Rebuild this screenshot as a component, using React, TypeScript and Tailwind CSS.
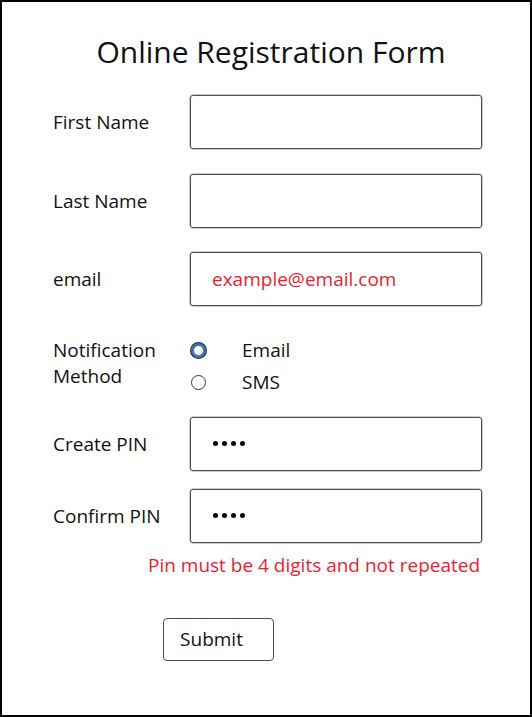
import React from "react";

const font = { fontFamily: '"Open Sans", "Noto Sans", sans-serif' };

const Field = ({ children }: { children?: React.ReactNode }) => (
  <div className="w-[292px] h-[54px] border border-[#4d4d4d] rounded-[3px] flex items-center pl-[21px] shadow-[0_0_0_0.5px_#9a9a9a]">
    {children}
  </div>
);

const PinDots = () => (
  <div className="flex gap-[4px] pl-[1px] -mt-[2px]">
    {[0, 1, 2, 3].map((i) => (
      <span key={i} className="w-[5px] h-[5px] rounded-full bg-black" />
    ))}
  </div>
);

const Row = ({
  label,
  className,
  children,
}: {
  label: string;
  className: string;
  children?: React.ReactNode;
}) => (
  <div className={`flex items-center ${className}`}>
    <div className="w-[137px] text-[19px] text-[#111]">{label}</div>
    <Field>{children}</Field>
  </div>
);

export default function App() {
  return (
    <div
      className="w-[532px] h-[717px] border-2 border-black bg-white box-border"
      style={font}
    >
      <h1 className="pt-[32px] text-center text-[30px] leading-[36px] text-[#111] pl-[10px]">
        Online Registration Form
      </h1>

      <div className="pl-[51px]">
        <Row label="First Name" className="mt-[25px]" />
        <Row label="Last Name" className="mt-[25px]" />
        <Row label="email" className="mt-[24px]">
          <span className="text-[19px] text-[#ee1c2e]">example@email.com</span>
        </Row>

        <div className="flex mt-[28px]">
          <div className="w-[137px] pt-[3px] text-[19px] leading-[26px] text-[#111]">
            Notification
            <br />
            Method
          </div>
          <div className="flex flex-col">
            <label className="flex items-center h-[32px]">
              <span className="ml-[1px] w-[15px] h-[15px] rounded-full border-[3px] border-[#4372b5] shadow-[0_0_0_1px_#2a2a2a] bg-white" />
              <span className="ml-[36px] text-[19px] text-[#111]">Email</span>
            </label>
            <label className="flex items-center h-[32px]">
              <span className="ml-[1px] w-[15px] h-[15px] rounded-full border border-[#333] bg-white" />
              <span className="ml-[36px] text-[19px] text-[#111]">SMS</span>
            </label>
          </div>
        </div>

        <Row label="Create PIN" className="mt-[19px]">
          <PinDots />
        </Row>
        <Row label="Confirm PIN" className="mt-[18px]">
          <PinDots />
        </Row>

        <p className="mt-[10px] ml-[95px] text-[19px] leading-[24px] text-[#ee1c2e]">
          Pin must be 4 digits and not repeated
        </p>

        <button
          type="button"
          className="mt-[41px] ml-[110px] w-[111px] h-[43px] border border-[#4d4d4d] rounded-[4px] text-[19px] text-[#111] pr-[14px]"
        >
          Submit
        </button>
      </div>
    </div>
  );
}
